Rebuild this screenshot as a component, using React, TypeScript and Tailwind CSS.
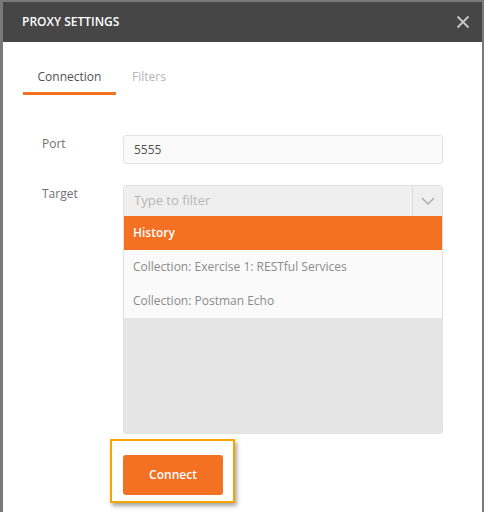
import React from "react";

const ORANGE = "bg-[#f47023]";

const App = () => {
  const items = ["Collection: Exercise 1: RESTful Services", "Collection: Postman Echo"];

  return (
    <div
      className="w-[484px] h-[512px] bg-[#7a7a7a] pt-[2px] pl-[3px] pr-[2px] overflow-hidden"
      style={{ fontFamily: '"Open Sans", sans-serif' }}
    >
      <div className="h-full bg-white flex flex-col">
        {/* Header */}
        <div className="h-[40px] bg-[#464646] flex items-center justify-between pl-[19px] pr-[12px] shrink-0">
          <span className="text-[12px] font-semibold text-white">PROXY SETTINGS</span>
          <svg width="14" height="14" viewBox="0 0 14 14" className="text-[#c8c8c8]">
            <path d="M1.5 1.5L12.5 12.5M12.5 1.5L1.5 12.5" stroke="currentColor" strokeWidth="1.8" />
          </svg>
        </div>

        {/* Tabs */}
        <div className="flex pl-[20px] pt-[25px] text-[12px]">
          <div className="w-[93px] h-[28px] flex justify-center border-b-[3px] border-[#f47023] text-[#505050] pt-[1px]">
            Connection
          </div>
          <div className="pl-[16px] text-[#b5b5b5] pt-[1px]">Filters</div>
        </div>

        {/* Form */}
        <div className="pt-[40px] pl-[39px] pr-[39px] flex flex-col text-[12px]">
          <div className="flex">
            <div className="w-[81px] text-[#707070] leading-[18px]">Port</div>
            <div className="flex-1 h-[29px] bg-[#fafafa] border border-[#e2e2e2] rounded-[3px] flex items-center pl-[10px] text-[#505050]">
              5555
            </div>
          </div>

          <div className="flex mt-[21px]">
            <div className="w-[81px] text-[#707070] leading-[18px]">Target</div>
            <div className="flex-1 flex flex-col border border-[#e0e0e0] rounded-[3px] overflow-hidden">
              <div className="h-[30px] bg-[#efefef] flex">
                <div className="flex-1 flex items-center pl-[10px] text-[#b8b8b8] text-[13px]">Type to filter</div>
                <div className="w-[30px] border-l border-[#dcdcdc] flex items-center justify-center">
                  <svg width="14" height="8" viewBox="0 0 14 8">
                    <path d="M1 1L7 7L13 1" fill="none" stroke="#b0b0b0" strokeWidth="1.5" />
                  </svg>
                </div>
              </div>
              <div className={`h-[34px] ${ORANGE} text-white font-semibold flex items-center pl-[9px]`}>History</div>
              {items.map((item) => (
                <div key={item} className="h-[34px] bg-[#fafafa] text-[#8a8a8a] flex items-center pl-[9px]">
                  {item}
                </div>
              ))}
              <div className="h-[115px] bg-[#e5e5e5]" />
            </div>
          </div>

          {/* Connect */}
          <div className="pl-[68px] mt-[5px]">
            <div className="w-[125px] h-[64px] border-2 border-[#f7a600] shadow-[2px_3px_4px_rgba(0,0,0,0.35)] flex items-start pt-[14px] pl-[11px]">
              <button className={`w-[100px] h-[40px] ${ORANGE} rounded-[3px] text-white text-[12px] font-semibold`}>
                Connect
              </button>
            </div>
          </div>
        </div>
      </div>
    </div>
  );
};

export default App;
